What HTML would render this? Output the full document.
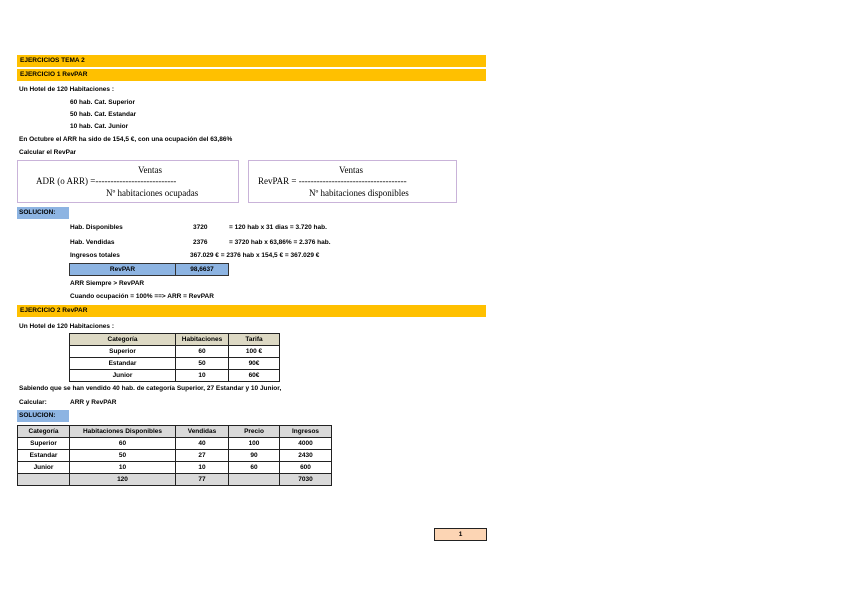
<!DOCTYPE html><html><head><meta charset="utf-8"><style>
body{margin:0;width:848px;height:599px;background:#fff;position:relative;font-family:"Liberation Sans",sans-serif;font-size:6.5px;font-weight:bold;color:#000;overflow:hidden}
.a{position:absolute;white-space:nowrap;line-height:12px}
.bar{position:absolute;left:17px;width:469px;height:12px;background:#ffc000;font-weight:bold;line-height:12px;padding-left:3px;box-sizing:border-box;font-size:6.5px}
.sol{position:absolute;left:17px;width:52px;height:12px;background:#8db4e2;font-weight:bold;line-height:12px;padding-left:2px;box-sizing:border-box;font-size:6.5px}
.box{position:absolute;border:1px solid #c9b3d9;font-family:"Liberation Serif",serif;font-size:9px;font-weight:normal}
table{position:absolute;border-collapse:collapse;font-size:6.5px}
td{border:1px solid #222;height:11px;padding:0;text-align:center;line-height:11px}
.g td{background:#ddd9c4;font-weight:bold}
.gr{background:#d9d9d9}
</style></head><body>
<div class="bar" style="top:55px">EJERCICIOS TEMA 2</div>
<div class="bar" style="top:69px">EJERCICIO 1 RevPAR</div>
<div class="a" style="left:19px;top:84px">Un Hotel de 120 Habitaciones :</div>
<div class="a" style="left:70px;top:97px">60 hab. Cat. Superior</div>
<div class="a" style="left:70px;top:109px">50 hab. Cat. Estandar</div>
<div class="a" style="left:70px;top:121px">10 hab. Cat. Junior</div>
<div class="a" style="left:19px;top:134px">En Octubre el ARR ha sido de 154,5 €, con una ocupación del 63,86%</div>
<div class="a" style="left:19px;top:147px">Calcular el RevPar</div>
<div class="box" style="left:17px;top:160px;width:220px;height:41px">
<div class="a" style="left:120px;top:3px">Ventas</div>
<div class="a" style="left:18px;top:14px">ADR (o ARR) =---------------------------</div>
<div class="a" style="left:88px;top:26px">Nº habitaciones ocupadas</div></div>
<div class="box" style="left:248px;top:160px;width:207px;height:41px">
<div class="a" style="left:90px;top:3px">Ventas</div>
<div class="a" style="left:9px;top:14px">RevPAR = ------------------------------------</div>
<div class="a" style="left:60px;top:26px">Nº habitaciones disponibles</div></div>
<div class="sol" style="top:207px">SOLUCION:</div>
<div class="a" style="left:70px;top:222px">Hab. Disponibles</div>
<div class="a" style="left:193px;top:222px">3720</div>
<div class="a" style="left:229px;top:222px">= 120 hab x 31 dias = 3.720 hab.</div>
<div class="a" style="left:70px;top:237px">Hab. Vendidas</div>
<div class="a" style="left:193px;top:237px">2376</div>
<div class="a" style="left:229px;top:237px">= 3720 hab x 63,86% = 2.376 hab.</div>
<div class="a" style="left:70px;top:250px">Ingresos totales</div>
<div class="a" style="left:190px;top:250px">367.029 € = 2376 hab x 154,5 € = 367.029 €</div>
<table style="left:69px;top:263px"><tr><td style="width:105px;background:#8db4e2;border:1px solid #333">RevPAR</td><td style="width:52px;background:#8db4e2;border:1px solid #333">98,6637</td></tr></table>
<div class="a" style="left:70px;top:278px">ARR Siempre &gt; RevPAR</div>
<div class="a" style="left:70px;top:291px">Cuando ocupación = 100% ==&gt; ARR = RevPAR</div>
<div class="bar" style="top:305px">EJERCICIO 2 RevPAR</div>
<div class="a" style="left:19px;top:321px">Un Hotel de 120 Habitaciones :</div>
<table style="left:69px;top:333px">
<tr class="g"><td style="width:105px">Categoría</td><td style="width:52px">Habitaciones</td><td style="width:50px">Tarifa</td></tr>
<tr><td>Superior</td><td>60</td><td>100 €</td></tr>
<tr><td>Estandar</td><td>50</td><td>90€</td></tr>
<tr><td>Junior</td><td>10</td><td>60€</td></tr></table>
<div class="a" style="left:19px;top:383px">Sabiendo que se han vendido 40 hab. de categoría Superior, 27 Estandar y 10 Junior,</div>
<div class="a" style="left:19px;top:397px">Calcular:</div>
<div class="a" style="left:70px;top:397px">ARR y RevPAR</div>
<div class="sol" style="top:410px">SOLUCION:</div>
<table style="left:17px;top:425px">
<tr><td style="width:51px" class="gr">Categoría</td><td style="width:105px" class="gr">Habitaciones Disponibles</td><td style="width:52px" class="gr">Vendidas</td><td style="width:50px" class="gr">Precio</td><td style="width:51px" class="gr">Ingresos</td></tr>
<tr><td>Superior</td><td>60</td><td>40</td><td>100</td><td>4000</td></tr>
<tr><td>Estandar</td><td>50</td><td>27</td><td>90</td><td>2430</td></tr>
<tr><td>Junior</td><td>10</td><td>10</td><td>60</td><td>600</td></tr>
<tr><td class="gr"></td><td class="gr">120</td><td class="gr">77</td><td class="gr"></td><td class="gr">7030</td></tr></table>
<table style="left:434px;top:528px"><tr><td style="width:51px;background:#fcd5b4">1</td></tr></table>
</body></html>
